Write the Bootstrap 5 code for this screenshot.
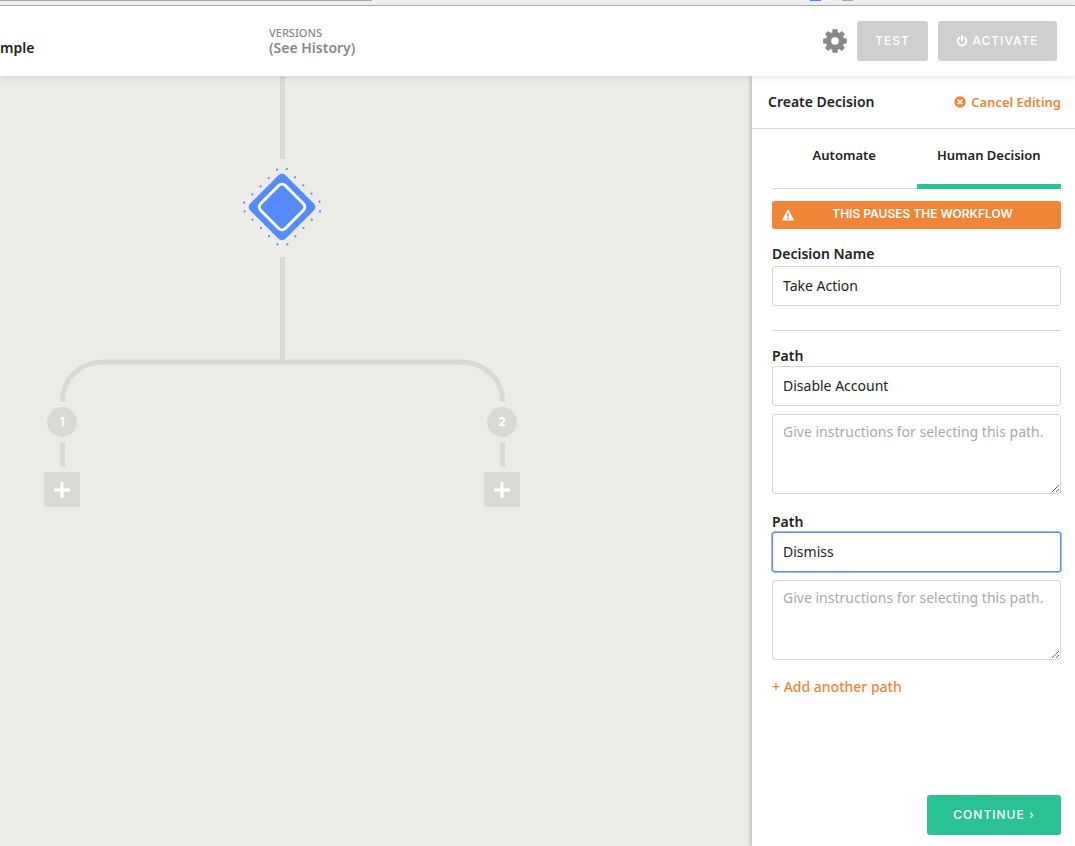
<!DOCTYPE html>
<html lang="en">
<head>
<meta charset="utf-8">
<meta name="viewport" content="width=device-width, initial-scale=1">
<title>Workflow editor</title>
<link href="https://cdn.jsdelivr.net/npm/bootstrap@5.3.0/dist/css/bootstrap.min.css" rel="stylesheet">
<script src="https://cdn.jsdelivr.net/npm/bootstrap@5.3.0/dist/js/bootstrap.bundle.min.js" defer></script>
<style>
  :root { --ink: #222; --line: #d6d6d6; --orange: #f08437; --green: #2ac194; --blue: #568bff; --track: #dad9d6; }
  body { font-family: "Noto Sans", "Open Sans", sans-serif; font-size: 14px; line-height: 20px; color: var(--ink); }

  .chrome-strip { height: 6px; background: #f1f1f1; border-bottom: 1px solid #b3b3b3; padding-right: 222px; gap: 21px; }
  .chrome-strip span { height: 1px; background: #a9a9a9; }
  .chrome-strip .strip-field { width: 372px; }
  .chrome-strip .strip-mark { width: 11px; }
  .chrome-strip .strip-active { background: #4285f4; }

  .topbar { height: 70px; box-shadow: 0 1px 6px rgba(0,0,0,.12); z-index: 2; padding-right: 18px; }
  .flow-title { width: 269px; padding: 16px 0 2px; }
  .versions { color: #888; line-height: 15px; padding-bottom: 2px; }
  .versions .caption { font-size: 11px; }
  .header-actions { gap: 10px; }

  .caps { font-family: Inter, "Liberation Sans", sans-serif; font-size: 12px; letter-spacing: 1px; }
  .btn-flat { height: 40px; border-radius: 3px; color: #fff; border: 0; }
  .btn-flat:hover { color: #fff; }
  .btn-muted, .btn-muted:hover { background: #cfcfcf; }
  .btn-go, .btn-go:hover { background: var(--green); }
  .btn-test { width: 71px; }
  .btn-activate { width: 119px; }
  .btn-go { width: 134px; }

  .flow-canvas { background: #ecebe7; }
  .flow-node { position: absolute; transform: translateX(-50%); }
  .step-num { width: 30px; height: 30px; background: var(--track); color: #fff; font: 700 12px/30px Inter, sans-serif; top: 331px; }
  .step-add { width: 36px; height: 35px; background: var(--track); border-radius: 3px; top: 396px; }
  .at-left { left: 62px; }
  .at-right { left: 502px; }

  .side-panel { width: 324px; border-left: 1px solid #d0d0cc; box-shadow: -1px 0 3px rgba(0,0,0,.2); }
  .panel-head { height: 53px; border-bottom: 1px solid var(--line); padding: 0 14px 0 16px; }
  .panel-title { font-size: 14px; font-weight: 600; line-height: 20px; }
  .accent, .accent:hover { color: var(--orange); }
  .cancel-link { font-size: 13px; gap: 5px; }
  .panel-tabs { height: 60px; border-bottom: 1px solid var(--line); }
  .panel-tabs .nav-link { color: var(--ink); font-size: 13px; font-weight: 600; padding: 16px 0 0; height: 60px; border-bottom: 5px solid transparent; }
  .panel-tabs .nav-link.active { border-bottom-color: var(--green); }
  .panel-body { padding: 0 14px 11px 20px; }
  .notice { background: var(--orange); height: 28px; margin-top: 12px; padding: 0 10px; border-radius: 3px; font: 600 12px/26px Inter, sans-serif; }
  .notice-icon { margin-top: 8px; }

  .field-group { padding-top: 15px; }
  .path-group + .path-group { padding-top: 18px; }
  .form-label { display: block; line-height: 20px; margin: 0; }
  .name-label { margin-bottom: 2px; }
  .form-control { border-color: var(--line); border-radius: 3px; font-size: 14px; line-height: 20px; padding: 7px 10px; color: var(--ink); }
  input.form-control { height: 40px; padding: 7px 10px 9px; }
  textarea.form-control { height: 80px; resize: vertical; }
  .form-control::placeholder { color: #aaa; }
  .form-control:focus { border-color: var(--blue); box-shadow: 0 0 0 1px rgba(86,139,255,.6); color: var(--ink); }
  .rule { border-top: 1px solid var(--line); margin-top: 24px; }
  .add-path { margin-top: 17px; }
</style>
</head>
<body class="vh-100 d-flex flex-column overflow-hidden">
  <div class="chrome-strip d-flex flex-shrink-0" aria-hidden="true">
    <span class="strip-field me-auto"></span>
    <span class="strip-mark strip-active"></span>
    <span class="strip-mark"></span>
  </div>

  <header class="topbar bg-white d-flex flex-shrink-0 align-items-center position-relative">
    <div class="flow-title fw-semibold">mple</div>
    <div class="versions fw-semibold me-auto">
      <div class="caption fw-medium">VERSIONS</div>
      <a class="text-reset text-decoration-none" href="#">(See History)</a>
    </div>
    <div class="header-actions d-flex align-items-center">
      <button class="btn p-0 border-0 lh-1" type="button" aria-label="Settings">
        <svg width="24" height="24" viewBox="-12.500 -12.500 25 25" fill="#888">
          <path fill-rule="evenodd" d="M-2.200-12.300H2.200L2.800-8.800 4.400-8.100 7.200-10.100 10.100-7.200 8.100-4.400 8.800-2.800 12.300-2.200V2.200L8.800 2.800 8.100 4.400 10.100 7.200 7.200 10.100 4.400 8.100 2.800 8.800 2.200 12.300H-2.200L-2.800 8.800-4.400 8.100-7.200 10.100-10.100 7.200-8.100 4.400-8.800 2.800-12.300 2.200V-2.200L-8.800-2.800-8.100-4.400-10.100-7.200-7.200-10.100-4.400-8.100-2.800-8.800ZM4.200 0A4.200 4.200 0 1 0-4.200 0 4.200 4.200 0 1 0 4.200 0Z" stroke="#888" stroke-width=".5" stroke-linejoin="round"/>
        </svg>
      </button>
      <button class="btn btn-flat btn-muted btn-test caps fw-medium" type="button">TEST</button>
      <button class="btn btn-flat btn-muted btn-activate caps fw-medium d-flex align-items-center justify-content-center gap-1 p-0" type="button">
        <svg width="12" height="12" viewBox="0 0 12 12" fill="none" stroke="#fff" stroke-width="1.800" stroke-linecap="round"><path d="M6 1v4.500M3.400 2.700a4.300 4.300 0 1 0 5.200 0"/></svg>
        ACTIVATE
      </button>
    </div>
  </header>

  <div class="d-flex flex-grow-1">
    <main class="flow-canvas flex-grow-1 position-relative overflow-hidden">
      <svg class="position-absolute top-0 start-0" width="560" height="440" fill="none" aria-hidden="true">
        <path stroke="#dad9d6" stroke-width="5" d="M282.500 0V83M282.500 181V286M62.500 326C62.500 302 80 286 104 286H460C484 286 502.500 302 502.500 326M62.500 366V391M502.500 366V391"/>
        <g transform="translate(232 74)">
          <rect x="25" y="32" width="50" height="50" rx="5" fill="#568bff" transform="rotate(45 50 57)"/>
          <rect x="32.500" y="39.500" width="35" height="35" rx="5" stroke="#fff" stroke-width="3" transform="rotate(45 50 57)"/>
          <path stroke="#568bff" stroke-width="2.200" stroke-linecap="round" d="M45 19.700h.01M54.800 19h.01M36.700 28h.01M63 27.300h.01M28.500 36.300h.01M71.300 35.300h.01M20.300 44.300h.01M79.500 43.700h.01M12.200 52.600h.01M87.500 51.700h.01M12.600 61.400h.01M88 61.400h.01M20.600 69.700h.01M79.800 69.700h.01M29 78h.01M71.500 78h.01M37 86.300h.01M63.400 86.300h.01M45.400 94.400h.01M55.300 94.400h.01"/>
        </g>
      </svg>
      <div class="flow-node at-left step-num rounded-circle text-center">1</div>
      <div class="flow-node at-right step-num rounded-circle text-center">2</div>
      <button class="flow-node at-left step-add border-0 p-0 d-flex align-items-center justify-content-center" type="button" aria-label="Add step to path 1">
        <svg width="16" height="16" stroke="#fff" stroke-width="3"><path d="M8 0V16M0 8H16"/></svg>
      </button>
      <button class="flow-node at-right step-add border-0 p-0 d-flex align-items-center justify-content-center" type="button" aria-label="Add step to path 2">
        <svg width="16" height="16" stroke="#fff" stroke-width="3"><path d="M8 0V16M0 8H16"/></svg>
      </button>
    </main>

    <aside class="side-panel bg-white position-relative d-flex flex-column flex-shrink-0">
      <div class="panel-head d-flex align-items-center justify-content-between flex-shrink-0">
        <h1 class="panel-title m-0">Create Decision</h1>
        <a class="accent cancel-link fw-semibold text-decoration-none d-flex align-items-center" href="#">
          <svg width="12" height="12" viewBox="0 0 12 12"><circle cx="6" cy="6" r="5.700" fill="#f08437"/><path d="M3.900 3.900l4.200 4.200M8.100 3.900L3.900 8.100" stroke="#fff" stroke-width="1.900"/></svg>
          Cancel Editing
        </a>
      </div>
      <form class="panel-body d-flex flex-column flex-grow-1">
        <ul class="nav nav-fill panel-tabs flex-nowrap">
          <li class="nav-item w-50"><a class="nav-link" href="#">Automate</a></li>
          <li class="nav-item w-50"><a class="nav-link active" href="#" aria-current="page">Human Decision</a></li>
        </ul>
        <div class="notice d-flex text-white">
          <svg class="notice-icon" width="12" height="12" viewBox="0 0 12 12"><path fill="#fff" stroke="#fff" stroke-linejoin="round" d="M6 .800 11.500 11H.500Z"/><path stroke="#f08437" stroke-width="1.600" d="M6 4.200V7.800M6 8.800V10.300"/></svg>
          <span class="flex-grow-1 text-center">THIS PAUSES THE WORKFLOW</span>
        </div>
        <div class="field-group">
          <label class="form-label name-label fw-semibold" for="decision">Decision Name</label>
          <input class="form-control" id="decision" type="text" value="Take Action">
        </div>
        <div class="rule"></div>
        <div class="field-group path-group">
          <label class="form-label fw-semibold" for="path1">Path</label>
          <input class="form-control mb-2" id="path1" type="text" value="Disable Account">
          <textarea class="form-control d-block" aria-label="Instructions for path 1" placeholder="Give instructions for selecting this path."></textarea>
        </div>
        <div class="field-group path-group">
          <label class="form-label fw-semibold" for="path2">Path</label>
          <input class="form-control mb-2" id="path2" type="text" value="Dismiss" autofocus>
          <textarea class="form-control d-block" aria-label="Instructions for path 2" placeholder="Give instructions for selecting this path."></textarea>
        </div>
        <a class="accent add-path fw-medium text-decoration-none align-self-start" href="#">+ Add another path</a>
        <button class="btn btn-flat btn-go caps fw-medium mt-auto align-self-end" type="button">CONTINUE ›</button>
      </form>
    </aside>
  </div>
</body>
</html>
